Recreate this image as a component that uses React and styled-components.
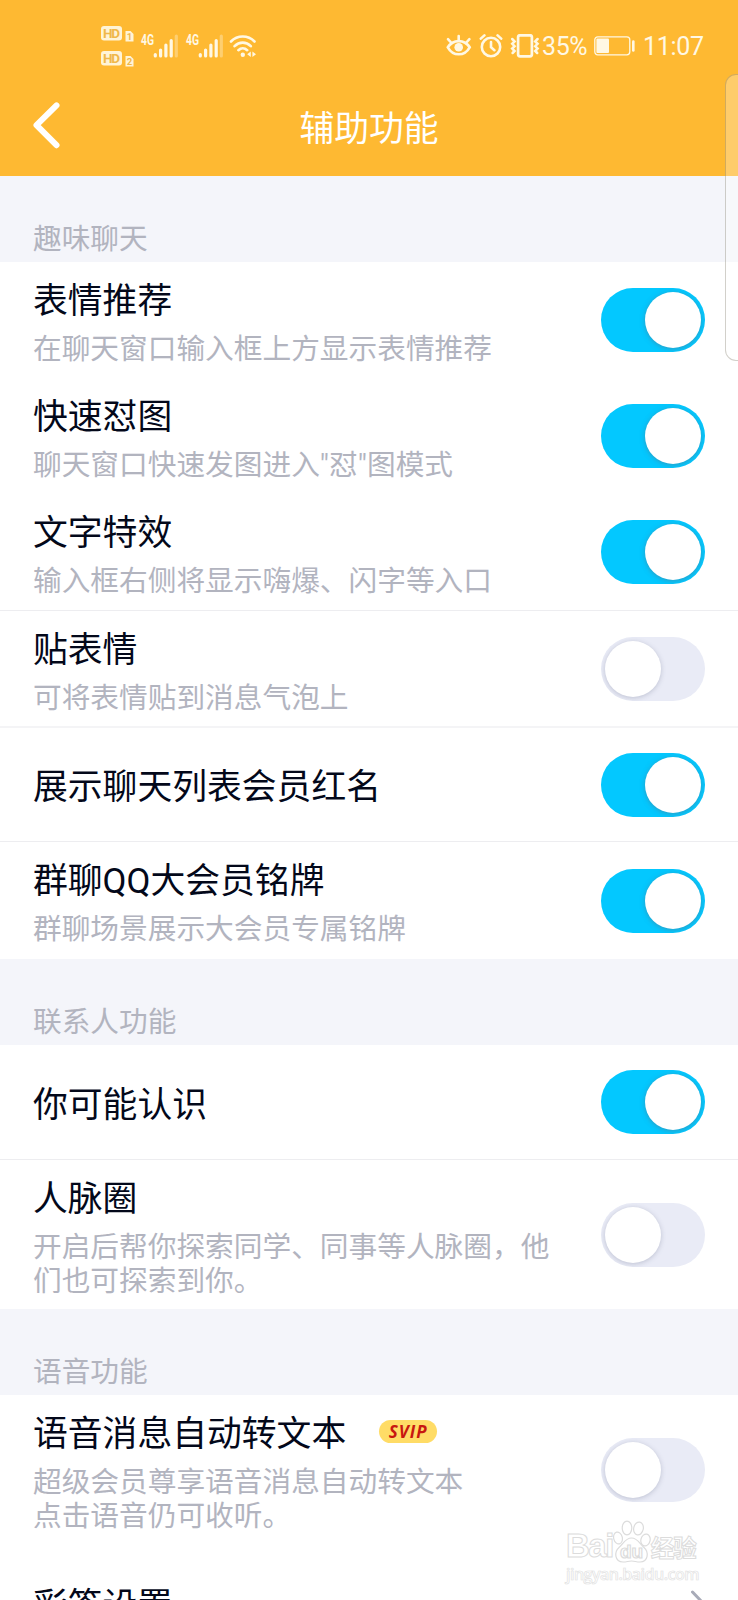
import React, { useState } from "react";
import styled, { createGlobalStyle, css } from "styled-components";

const groups = [
  {
    label: "趣味聊天",
    rows: [
      { id: "recommend", title: "表情推荐", desc: "在聊天窗口输入框上方显示表情推荐", on: true, height: 116 },
      { id: "meme", title: "快速怼图", desc: '聊天窗口快速发图进入"怼"图模式', on: true, height: 116 },
      { id: "effect", title: "文字特效", desc: "输入框右侧将显示嗨爆、闪字等入口", on: true, height: 117, line: 1 },
      { id: "sticker", title: "贴表情", desc: "可将表情贴到消息气泡上", on: false, height: 117, line: 2 },
      { id: "redname", title: "展示聊天列表会员红名", on: true, height: 114, line: 1 },
      { id: "badge", title: "群聊QQ大会员铭牌", desc: "群聊场景展示大会员专属铭牌", on: true, height: 117 }
    ]
  },
  {
    label: "联系人功能",
    rows: [
      { id: "maybe", title: "你可能认识", on: true, height: 115, line: 1 },
      {
        id: "circle",
        title: "人脉圈",
        desc: "开启后帮你探索同学、同事等人脉圈，他\n们也可探索到你。",
        on: false,
        height: 149
      }
    ]
  },
  {
    label: "语音功能",
    rows: [
      {
        id: "voice",
        title: "语音消息自动转文本",
        tag: "SVIP",
        desc: "超级会员尊享语音消息自动转文本\n点击语音仍可收听。",
        on: false,
        height: 150
      },
      { id: "ringtone", title: "彩签设置", link: true, height: 116 }
    ]
  }
];

const HdBadge = ({ sim }) => (
  <svg width="33" height="16" viewBox="0 0 33 16">
    <rect x="0" y="0" width="21" height="14.5" rx="3" fill="#fff4d6" />
    <HdText x="10.5" y="12" textAnchor="middle" textLength="17">
      HD
    </HdText>
    <path d="M24.5 5h5l3 3v7.5h-8z" fill="#fff4d6" />
    <SimText x="28.5" y="13.8" textAnchor="middle">
      {sim}
    </SimText>
  </svg>
);

const Signal = () => (
  <SignalIcon width="38" height="24" viewBox="0 0 38 24">
    <NetText x="0" y="11" textLength="13" lengthAdjust="spacingAndGlyphs">
      4G
    </NetText>
    <g stroke="#fff8e4" strokeWidth="3.2" strokeLinecap="round">
      <path d="M14.3 20.5v1.5M19.6 16v6M24.9 11v11M30.2 6.5v15.5" />
      <path d="M35.3 2v20" opacity="0.35" />
    </g>
  </SignalIcon>
);

const Wifi = () => (
  <WifiIcon width="28" height="24" viewBox="0 0 28 24">
    <path d="M2 7.5C8.5 0.8 19 0.8 25.5 7.5M5.6 12.2c4.6-4.8 11.6-4.8 16.2 0M9.4 16.2c2.6-2.5 6.2-2.5 8.8 0" />
    <circle cx="13.8" cy="20.7" r="2.2" fill="#fff8e4" stroke="none" />
    <path d="M21.8 17.6v5.4l-3.6-2.7zM23.4 17.6v5.4l3.6-2.7z" fill="#fff8e4" stroke="none" />
  </WifiIcon>
);

const Eye = () => (
  <svg width="26" height="24" viewBox="0 0 26 24" fill="none" stroke="#fff8e4" strokeWidth="2.6" strokeLinecap="round">
    <path d="M1.8 13.3C7 5 18.5 5 23.7 13.3 18.5 22.6 7 22.6 1.8 13.3z" />
    <circle cx="12.7" cy="13.3" r="4.3" fill="#fff8e4" stroke="none" />
    <path d="M12.7 6V2M5 8.5 2 5.2M20.4 8.5l3-3.3" />
  </svg>
);

const Alarm = () => (
  <svg width="24" height="24" viewBox="0 0 24 24" fill="none" stroke="#fff8e4" strokeWidth="2.6" strokeLinecap="round">
    <circle cx="12" cy="13" r="9.2" />
    <path d="M12 8v5.2l3.4 3M1.8 4.6 5.4 1.4M22.2 4.6l-3.6-3.2" />
  </svg>
);

const Vibrate = () => (
  <svg width="30" height="24" viewBox="0 0 30 24" fill="none" stroke="#fff8e4" strokeWidth="2.5" strokeLinecap="round">
    <rect x="8.1" y="1.3" width="13.8" height="21" rx="2" strokeWidth="2.7" />
    <path d="M2.2 5l2.4 2.4-2.4 2.4 2.4 2.4-2.4 2.4 2.4 2.4-2 2" />
    <path d="M27.6 5l-2.4 2.4 2.4 2.4-2.4 2.4 2.4 2.4-2.4 2.4 2 2" />
  </svg>
);

const Battery = () => (
  <svg width="41" height="20" viewBox="0 0 41 20">
    <rect x="0.8" y="0.8" width="35" height="18" rx="3" fill="none" stroke="#fff8e4" strokeWidth="1.3" />
    <rect x="2.4" y="2.6" width="12.6" height="14.4" rx="1" fill="#fff8e4" />
    <path d="M39.3 5.5v9" stroke="#fff8e4" strokeWidth="2.6" strokeLinecap="round" />
  </svg>
);

const BackIcon = () => (
  <svg width="28" height="48" viewBox="0 0 28 48" fill="none" stroke="#fff" strokeWidth="6" strokeLinecap="round">
    <path d="M23.5 4.4 3.5 24.2l20 20" strokeLinejoin="round" />
  </svg>
);

const Chevron = () => (
  <svg width="14" height="26" viewBox="0 0 14 26" fill="none" stroke="#a8abb8" strokeWidth="3" strokeLinecap="round">
    <path d="M1.5 2 12 13 1.5 24" />
  </svg>
);

const Paw = () => (
  <svg width="38" height="44" viewBox="0 0 38 44" fill="#fff" stroke="#dcdcdc" strokeWidth="1.2">
    <ellipse cx="5" cy="18" rx="4.3" ry="6" transform="rotate(-14 5 18)" />
    <ellipse cx="14" cy="8" rx="4.8" ry="6.8" />
    <ellipse cx="25.5" cy="8.5" rx="4.8" ry="6.5" transform="rotate(12 25.5 8.5)" />
    <ellipse cx="32.5" cy="20" rx="4.6" ry="6" transform="rotate(14 32.5 20)" />
    <path d="M18.5 18c6 0 8 5.5 12.5 9.5 5 4.5 4.5 14.5-4 14.5-4 0-5-1-8.5-1s-4.5 1-8.5 1c-8.5 0-9-10-4-14.5C10.5 23.5 12.5 18 18.5 18z" />
    <PawText x="18.5" y="38" textAnchor="middle">
      du
    </PawText>
  </svg>
);

const SettingRow = ({ row }) => {
  const [on, setOn] = useState(row.on);

  return (
    <Row $height={row.height} $line={row.line}>
      <RowText $single={!row.desc}>
        <RowTitle>
          {row.title}
          {row.tag && <Tag>{row.tag}</Tag>}
        </RowTitle>
        {row.desc && <RowDesc>{row.desc}</RowDesc>}
      </RowText>
      {row.link ? (
        <Chevron />
      ) : (
        <Switch role="switch" aria-checked={on} $on={on} onClick={() => setOn(!on)}>
          <Knob $on={on} />
        </Switch>
      )}
    </Row>
  );
};

const App = () => (
  <>
    <GlobalStyle />
    <Screen>
      <Header>
        <StatusBar>
          <StatusLeft>
            <HdStack>
              <HdBadge sim="1" />
              <HdBadge sim="2" />
            </HdStack>
            <Signal />
            <Signal />
            <Wifi />
          </StatusLeft>
          <StatusRight>
            <Eye />
            <Alarm />
            <Vibrate />
            <Percent>35%</Percent>
            <Battery />
            <Clock>11:07</Clock>
          </StatusRight>
        </StatusBar>
        <NavBar>
          <BackButton>
            <BackIcon />
          </BackButton>
          <NavTitle>辅助功能</NavTitle>
        </NavBar>
      </Header>
      {groups.map(group => (
        <section key={group.label}>
          <GroupLabel>{group.label}</GroupLabel>
          {group.rows.map(row => (
            <SettingRow key={row.id} row={row} />
          ))}
        </section>
      ))}
      <EdgePanel />
      <Watermark>
        <WatermarkLogo>
          <span>Bai</span>
          <Paw />
          <WatermarkCn>经验</WatermarkCn>
        </WatermarkLogo>
        <WatermarkUrl>jingyan.baidu.com</WatermarkUrl>
      </Watermark>
    </Screen>
  </>
);

export default App;

const GlobalStyle = createGlobalStyle`
  body {
    margin: 0;
    background: #fff;
    font-family: Roboto, "Noto Sans CJK SC", sans-serif;
  }
  * {
    box-sizing: border-box;
  }
  svg {
    display: block;
    flex-shrink: 0;
  }
`;

const Screen = styled.div`
  position: relative;
  width: 738px;
  height: 1600px;
  overflow: hidden;
  background: #fff;
`;

const Header = styled.header`
  height: 176px;
  background: #feb932;
`;

const StatusBar = styled.div`
  height: 91px;
  padding: 1px 35px 0 101px;
  display: flex;
  justify-content: space-between;
`;

const StatusLeft = styled.div`
  display: flex;
  gap: 7px;
  align-items: center;
`;

const HdStack = styled.div`
  display: flex;
  flex-direction: column;
  gap: 9px;
  padding-top: 1px;
`;

const SignalIcon = styled.svg`
  overflow: visible;
`;

const WifiIcon = styled.svg`
  margin-left: -2px;
  fill: none;
  stroke: #fff8e4;
  stroke-width: 2.6px;
  stroke-linecap: round;
`;

const StatusRight = styled.div`
  display: flex;
  align-items: center;
  color: #fff8e4;
  font-size: 25px;
  line-height: 30px;
  gap: 7px;
`;

const Percent = styled.span`
  width: 45px;
  margin-left: -5px;
  padding-top: 2px;
  letter-spacing: -0.4px;
`;

const Clock = styled.span`
  width: 61px;
  padding: 2px 0 0 1px;
  letter-spacing: -0.3px;
`;

const statusText = css`
  font-family: Roboto, sans-serif;
  font-weight: 700;
`;

const HdText = styled.text`
  ${statusText}
  font-size: 13.5px;
  fill: #f0b84a;
`;

const SimText = styled.text`
  ${statusText}
  font-size: 9.5px;
  fill: #f0b84a;
`;

const NetText = styled.text`
  ${statusText}
  font-size: 15px;
  fill: #fff8e4;
`;

const NavBar = styled.div`
  height: 85px;
  padding: 0 33px;
  display: grid;
  grid-template-columns: 40px 1fr 40px;
  align-items: center;
`;

const BackButton = styled.button`
  height: 48px;
  margin-top: -17px;
  padding: 0;
  border: none;
  background: none;
  cursor: pointer;
`;

const NavTitle = styled.h1`
  margin: -10px 0 0;
  color: #fff;
  font-size: 34.8px;
  font-weight: 400;
  line-height: 48px;
  text-align: center;
`;

const GroupLabel = styled.h2`
  height: 86px;
  margin: 0;
  padding: 46px 33px 0;
  background: #f4f5fa;
  color: #b2b4bf;
  font-size: 28.7px;
  font-weight: 400;
  line-height: 34px;
`;

const Row = styled.div`
  height: ${props => props.$height}px;
  padding: 0 33px;
  display: flex;
  align-items: center;
  justify-content: space-between;
  background: #fff;
  border-bottom: ${props => props.$line || 0}px solid ${props => (props.$line === 2 ? "#f4f4f6" : "#ededf0")};
`;

const RowText = styled.div`
  align-self: ${props => (props.$single ? "center" : "flex-start")};
  padding-top: ${props => (props.$single ? 5 : 18.5)}px;
`;

const RowTitle = styled.div`
  display: flex;
  align-items: center;
  color: #03081a;
  font-size: 34.8px;
  font-weight: 400;
  line-height: 40px;
  white-space: nowrap;
`;

const RowDesc = styled.div`
  margin-top: 12.5px;
  color: #b2b4bf;
  font-size: 28.7px;
  font-weight: 400;
  line-height: 33.7px;
  white-space: pre;
`;

const Tag = styled.span`
  width: 58px;
  height: 23px;
  margin: -5px 0 0 33px;
  border-radius: 12px;
  background: #ffdc66;
  color: #c81810;
  font-family: "Open Sans", sans-serif;
  font-size: 17px;
  font-style: italic;
  font-weight: 700;
  letter-spacing: 1px;
  line-height: 23px;
  text-align: center;
`;

const Switch = styled.button`
  width: 104px;
  height: 64px;
  padding: 4px;
  border: none;
  border-radius: 32px;
  background: ${props => (props.$on ? "#03c8ff" : "#e9ebf6")};
  display: flex;
  justify-content: ${props => (props.$on ? "flex-end" : "flex-start")};
  cursor: pointer;
  overflow: hidden;
`;

const Knob = styled.span`
  width: 56px;
  height: 56px;
  border-radius: 50%;
  background: #fff;
  box-shadow: 0 1px 5px ${props => (props.$on ? "rgba(90, 110, 130, 0.5)" : "rgba(90, 95, 125, 0.3)")};
`;

const EdgePanel = styled.div`
  position: absolute;
  top: 74px;
  right: -20px;
  width: 33px;
  height: 287px;
  border: 1px solid rgba(90, 80, 60, 0.27);
  border-radius: 11px;
  background: rgba(255, 255, 255, 0.28);
`;

const Watermark = styled.div`
  position: absolute;
  top: 1520px;
  left: 566px;
  width: 136px;
  color: #fff;
  -webkit-text-stroke: 1px #dcdcdc;
  pointer-events: none;
`;

const WatermarkLogo = styled.div`
  height: 44px;
  display: flex;
  align-items: flex-end;
  font-family: "Liberation Sans", sans-serif;
  font-size: 33px;
  font-weight: 700;
  line-height: 36px;
  letter-spacing: -1.5px;
`;

const WatermarkCn = styled.span`
  font-family: "Noto Sans CJK SC", sans-serif;
  font-size: 23.5px;
  line-height: 34px;
  letter-spacing: -1px;
`;

const WatermarkUrl = styled.div`
  font-family: "Open Sans", sans-serif;
  font-size: 16px;
  font-weight: 600;
  line-height: 20px;
  letter-spacing: -0.5px;
  -webkit-text-stroke: 0.7px #e2e2e2;
`;

const PawText = styled.text`
  font-family: "Liberation Sans", sans-serif;
  font-size: 19px;
  font-weight: 700;
  letter-spacing: 0;
  -webkit-text-stroke: 0;
`;
